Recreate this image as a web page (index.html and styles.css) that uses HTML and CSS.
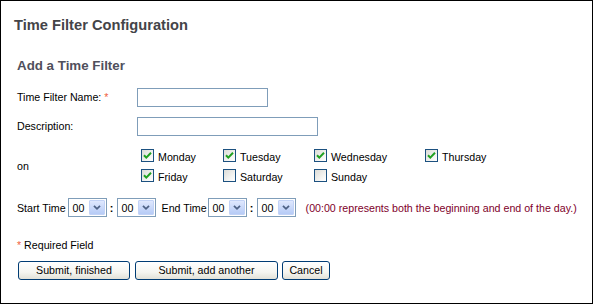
FILE: index.html
```html
<!DOCTYPE html>
<html>
<head>
<meta charset="utf-8">
<link rel="stylesheet" href="styles.css">
</head>
<body>
<div class="frame">
  <h1 class="title">Time Filter Configuration</h1>
  <div class="section">
    <h2 class="subtitle">Add a Time Filter</h2>
    <div class="form">
      <div class="row">
        <div class="label">Time Filter Name: <span class="req">*</span></div>
        <div class="input name-input"></div>
      </div>
      <div class="row">
        <div class="label">Description:</div>
        <div class="input desc-input"></div>
      </div>
      <div class="row days-row">
        <div class="label">on</div>
        <div class="days">
          <div class="day"><span class="cb checked"><svg viewBox="0 0 11 11" width="11" height="11"><path d="M2 5.2 L4.3 7.6 L9 2.8" fill="none" stroke="#21a121" stroke-width="2"/></svg></span><span class="dl">Monday</span></div>
          <div class="day"><span class="cb checked"><svg viewBox="0 0 11 11" width="11" height="11"><path d="M2 5.2 L4.3 7.6 L9 2.8" fill="none" stroke="#21a121" stroke-width="2"/></svg></span><span class="dl">Tuesday</span></div>
          <div class="day"><span class="cb checked"><svg viewBox="0 0 11 11" width="11" height="11"><path d="M2 5.2 L4.3 7.6 L9 2.8" fill="none" stroke="#21a121" stroke-width="2"/></svg></span><span class="dl">Wednesday</span></div>
          <div class="day"><span class="cb checked"><svg viewBox="0 0 11 11" width="11" height="11"><path d="M2 5.2 L4.3 7.6 L9 2.8" fill="none" stroke="#21a121" stroke-width="2"/></svg></span><span class="dl">Thursday</span></div>
          <div class="day"><span class="cb checked"><svg viewBox="0 0 11 11" width="11" height="11"><path d="M2 5.2 L4.3 7.6 L9 2.8" fill="none" stroke="#21a121" stroke-width="2"/></svg></span><span class="dl">Friday</span></div>
          <div class="day"><span class="cb"></span><span class="dl">Saturday</span></div>
          <div class="day"><span class="cb"></span><span class="dl">Sunday</span></div>
        </div>
      </div>
      <div class="time-row">
        <span class="tl">Start Time</span>
        <div class="sel"><span class="val">00</span><span class="arr"><svg viewBox="0 0 15 15" width="15" height="15"><path d="M4 5.5 L7.5 9 L11 5.5" fill="none" stroke="#4d6185" stroke-width="2"/></svg></span></div>
        <span class="colon">:</span>
        <div class="sel"><span class="val">00</span><span class="arr"><svg viewBox="0 0 15 15" width="15" height="15"><path d="M4 5.5 L7.5 9 L11 5.5" fill="none" stroke="#4d6185" stroke-width="2"/></svg></span></div>
        <span class="tl end">End Time</span>
        <div class="sel"><span class="val">00</span><span class="arr"><svg viewBox="0 0 15 15" width="15" height="15"><path d="M4 5.5 L7.5 9 L11 5.5" fill="none" stroke="#4d6185" stroke-width="2"/></svg></span></div>
        <span class="colon">:</span>
        <div class="sel"><span class="val">00</span><span class="arr"><svg viewBox="0 0 15 15" width="15" height="15"><path d="M4 5.5 L7.5 9 L11 5.5" fill="none" stroke="#4d6185" stroke-width="2"/></svg></span></div>
        <span class="note">(00:00 represents both the beginning and end of the day.)</span>
      </div>
      <div class="required"><span class="req">*</span> Required Field</div>
      <div class="buttons">
        <div class="btn b1">Submit, finished</div>
        <div class="btn b2">Submit, add another</div>
        <div class="btn b3">Cancel</div>
      </div>
    </div>
  </div>
</div>
</body>
</html>
```
FILE: styles.css
```css
html, body {
  margin: 0;
  padding: 0;
  background: #fff;
}
body {
  font-family: "Liberation Sans", Arial, sans-serif;
  font-size: 10.67px;
  color: #000;
}
.frame {
  box-sizing: border-box;
  width: 593px;
  height: 304px;
  border: 1px solid #000;
  padding: 15px 0 0 13px;
}
.title {
  margin: 0;
  font-size: 14.67px;
  line-height: 18px;
  font-weight: bold;
  color: #444448;
}
.section {
  padding-left: 3px;
}
.subtitle {
  margin: 24px 0 0 0;
  font-size: 13.33px;
  line-height: 16px;
  font-weight: bold;
  color: #50505c;
}
.form {
  margin-top: 14px;
}
.row {
  display: flex;
  align-items: center;
  margin-bottom: 10px;
}
.label {
  width: 120px;
  flex: none;
  line-height: 13px;
}
.req {
  color: #f0603c;
}
.input {
  box-sizing: border-box;
  height: 19px;
  border: 1px solid #7f9db9;
  background: #fff;
}
.name-input { width: 131px; }
.desc-input { width: 181px; }
.days-row {
  margin-bottom: 12px;
}
.days {
  display: grid;
  grid-template-columns: 82px 91px 111px auto;
  grid-auto-rows: 20px;
}
.day {
  display: flex;
  align-items: center;
  height: 20px;
}
.cb {
  box-sizing: border-box;
  width: 13px;
  height: 13px;
  margin: 3px 3px 4px 4px;
  border: 1px solid #1c5180;
  background: linear-gradient(135deg, #dcdcd7 0%, #f6f6f4 70%, #ffffff 100%);
  display: flex;
  align-items: center;
  justify-content: center;
  flex: none;
}
.cb svg { display: block; }
.dl {
  padding-top: 2px;
  margin-left: 1px;
}
.time-row {
  display: flex;
  align-items: center;
  height: 19px;
}
.tl {
  margin-right: 2px;
}
.tl.end {
  margin-left: 6px;
  margin-right: 1px;
}
.sel {
  box-sizing: border-box;
  width: 39px;
  height: 19px;
  border: 1px solid #7f9db9;
  background: #fff;
  display: flex;
  align-items: center;
  justify-content: space-between;
  padding: 1px;
}
.val {
  padding-left: 3px;
}
.arr {
  box-sizing: border-box;
  width: 16px;
  height: 15px;
  background: linear-gradient(#dfe8fe, #b6cbf6);
  border: 1px solid #c2d2f6;
  border-radius: 1px;
  display: flex;
  align-items: center;
  justify-content: center;
}
.arr svg { display: block; width: 14px; height: 13px; }
.colon {
  width: 10px;
  text-align: center;
  font-weight: bold;
}
.note {
  margin-left: 10px;
  color: #80002a;
}
.required {
  margin-top: 22px;
  line-height: 13px;
}
.buttons {
  display: flex;
  margin-top: 9px;
  margin-left: 1px;
}
.btn {
  box-sizing: border-box;
  height: 19px;
  border: 1px solid #003c74;
  border-radius: 3px;
  background: linear-gradient(#ffffff 0%, #f5f5f0 60%, #e2e1d8 100%);
  text-align: center;
  line-height: 17px;
}
.b1 { width: 112px; }
.b2 { width: 143px; margin-left: 5px; }
.b3 { width: 48px; margin-left: 4px; }
```
